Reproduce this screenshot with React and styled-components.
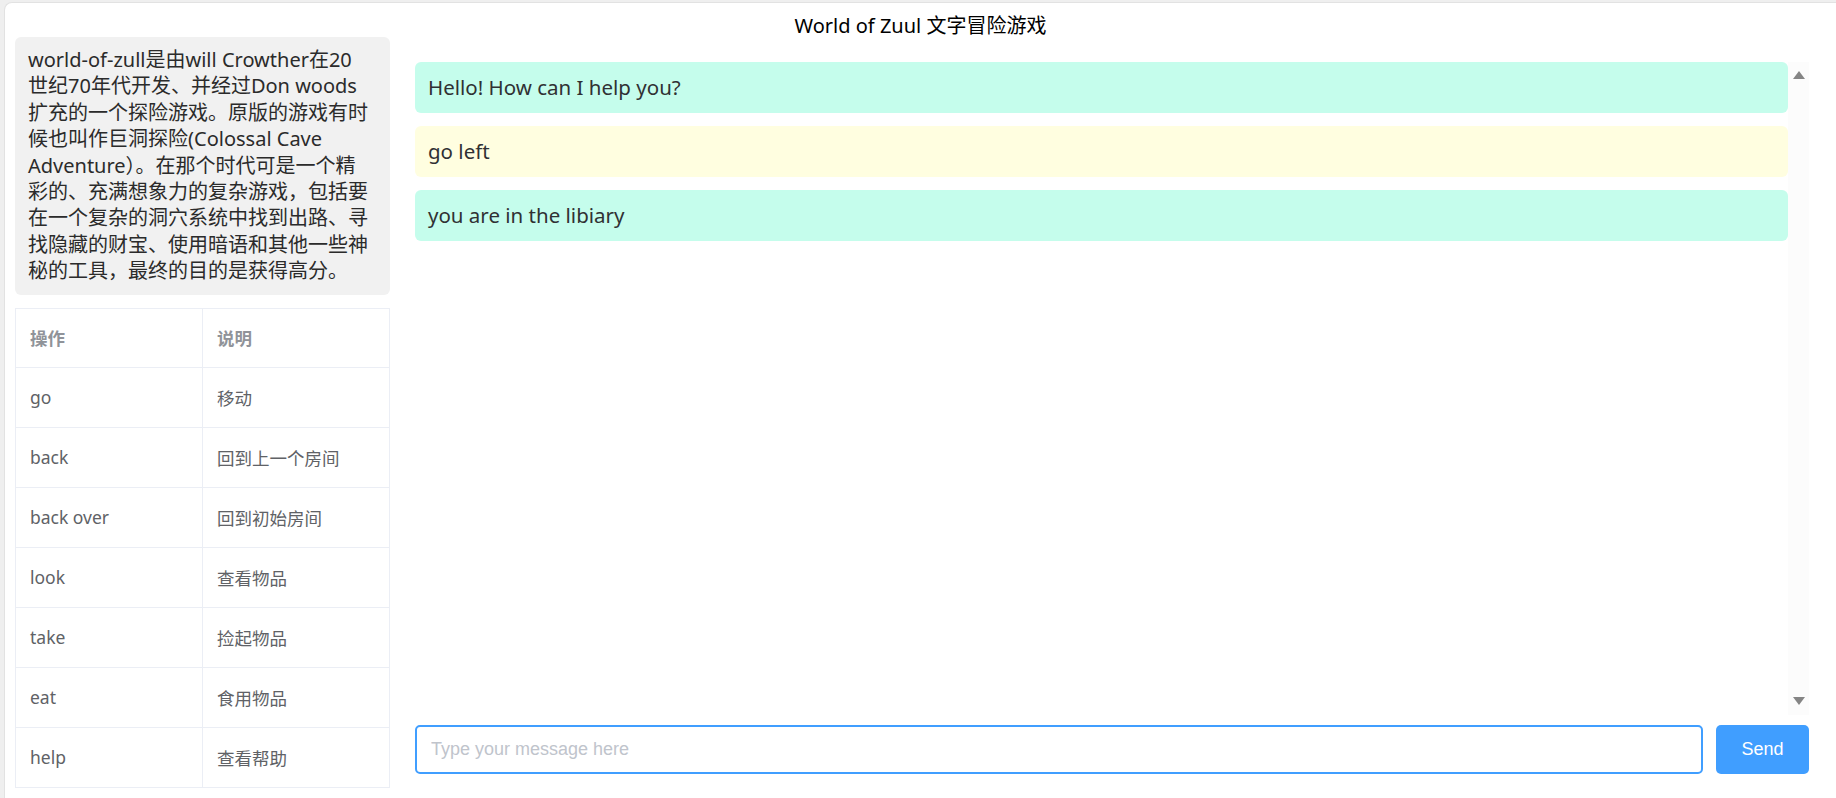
import React from "react";
import styled, { createGlobalStyle } from "styled-components";

const GlobalStyle = createGlobalStyle`
  html, body {
    margin: 0;
    padding: 0;
    background: #efefef;
    font-family: "Noto Sans", "Noto Sans CJK SC", sans-serif;
  }
  * {
    box-sizing: border-box;
  }
`;

const commands = [
  { op: "go", desc: "移动" },
  { op: "back", desc: "回到上一个房间" },
  { op: "back over", desc: "回到初始房间" },
  { op: "look", desc: "查看物品" },
  { op: "take", desc: "捡起物品" },
  { op: "eat", desc: "食用物品" },
  { op: "help", desc: "查看帮助" },
];

const messages = [
  { from: "bot", text: "Hello! How can I help you?" },
  { from: "user", text: "go left" },
  { from: "bot", text: "you are in the libiary" },
];

const App = () => {
  return (
    <Page>
      <GlobalStyle />
      <Card>
        <Header>World of Zuul 文字冒险游戏</Header>
        <Body>
          <Sidebar>
            <Intro>
              world-of-zull是由will Crowther在20世纪70年代开发、并经过Don
              woods扩充的一个探险游戏。原版的游戏有时候也叫作巨洞探险(Colossal
              Cave Adventure）。在那个时代可是一个精彩的、充满想象力的复杂游戏，包括要在一个复杂的洞穴系统中找到出路、寻找隐藏的财宝、使用暗语和其他一些神秘的工具，最终的目的是获得高分。
            </Intro>
            <Table>
              <thead>
                <tr>
                  <Th>操作</Th>
                  <Th>说明</Th>
                </tr>
              </thead>
              <tbody>
                {commands.map((c) => (
                  <tr key={c.op}>
                    <Td>{c.op}</Td>
                    <Td>{c.desc}</Td>
                  </tr>
                ))}
              </tbody>
            </Table>
          </Sidebar>
          <Chat>
            <History>
              <MessageList>
                {messages.map((m, i) => (
                  <Message key={i} from={m.from}>
                    {m.text}
                  </Message>
                ))}
              </MessageList>
              <Scrollbar>
                <Arrow up />
                <Arrow />
              </Scrollbar>
            </History>
            <InputRow>
              <TextInput placeholder="Type your message here" autoFocus />
              <SendButton>Send</SendButton>
            </InputRow>
          </Chat>
        </Body>
      </Card>
    </Page>
  );
};

const Page = styled.div`
  padding: 2px 0 0 4px;
  min-height: 100vh;
`;

const Card = styled.div`
  background: #fff;
  border-top: 1px solid #e2e2e2;
  border-left: 1px solid #e2e2e2;
  border-radius: 8px 0 0 0;
  min-height: calc(100vh - 2px);
`;

const Header = styled.h1`
  margin: 0;
  height: 34px;
  display: flex;
  align-items: flex-end;
  justify-content: center;
  font-size: 20px;
  font-weight: 400;
  line-height: 22px;
  color: #000;
`;

const Body = styled.div`
  display: flex;
  gap: 25px;
  padding: 0 27px 0 10px;
`;

const Sidebar = styled.div`
  width: 375px;
  flex-shrink: 0;
  display: flex;
  flex-direction: column;
  gap: 13px;
`;

const Intro = styled.div`
  background: #f1f1f1;
  border-radius: 6px;
  padding: 10px 20px 10px 13px;
  font-size: 20px;
  line-height: 26.4px;
  color: #2b2b2b;
`;

const Table = styled.table`
  width: 100%;
  border-collapse: collapse;
  table-layout: fixed;
  border: 1px solid #ebeef5;
  font-size: 17.5px;
`;

const Th = styled.th`
  height: 59px;
  padding: 0 14px;
  text-align: left;
  font-weight: 700;
  color: #909399;
  border: 1px solid #ebeef5;
`;

const Td = styled.td`
  height: 60px;
  padding: 0 14px;
  color: #606266;
  border: 1px solid #ebeef5;
`;

const Chat = styled.div`
  flex: 1;
  display: flex;
  flex-direction: column;
  padding-top: 25px;
`;

const History = styled.div`
  height: 653px;
  display: flex;
`;

const MessageList = styled.div`
  flex: 1;
  display: flex;
  flex-direction: column;
  gap: 13px;
`;

const Message = styled.div`
  height: 51px;
  padding: 0 13px;
  border-radius: 6px;
  background: ${(p) => (p.from === "user" ? "#fffee0" : "#c5fdec")};
  font-size: 20.5px;
  line-height: 51px;
  color: #303133;
`;

const Scrollbar = styled.div`
  width: 21px;
  background: #fcfcfc;
  display: flex;
  flex-direction: column;
  justify-content: space-between;
  align-items: center;
  padding: 9px 0 10px;
`;

const Arrow = styled.span`
  width: 0;
  height: 0;
  border-left: 6px solid transparent;
  border-right: 6px solid transparent;
  ${(p) =>
    p.up
      ? "border-bottom: 8px solid #858585;"
      : "border-top: 8px solid #858585;"}
`;

const InputRow = styled.div`
  display: flex;
  gap: 13px;
  margin-top: 10px;
  height: 49px;
`;

const TextInput = styled.input`
  flex: 1;
  height: 100%;
  border: 2px solid #409eff;
  border-radius: 5px;
  padding: 0 14px;
  font-family: "Liberation Sans", Arial, sans-serif;
  font-size: 18px;
  color: #606266;
  outline: none;
  &::placeholder {
    color: #c0c4cc;
  }
`;

const SendButton = styled.button`
  width: 93px;
  height: 100%;
  border: none;
  border-radius: 5px;
  background: #409eff;
  color: #fff;
  font-family: "Liberation Sans", Arial, sans-serif;
  font-size: 18px;
  cursor: pointer;
`;

export default App;
